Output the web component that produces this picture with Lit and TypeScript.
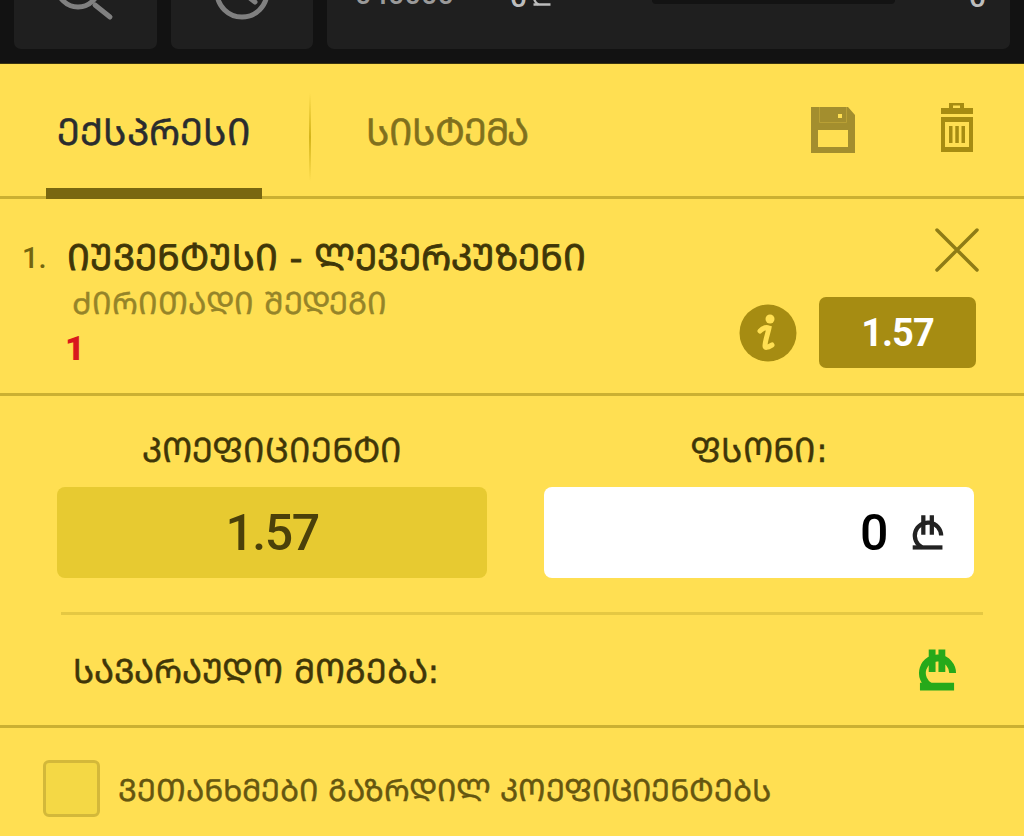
import { css, html, LitElement } from 'lit';
import { customElement } from 'lit/decorators.js';

const gel = html`<svg class="gel" viewBox="0 0 40 42" aria-hidden="true">
  <path d="M35.500 24A15.500 15.500 0 1 0 13 38" />
  <path class="bar" d="M2 38H37" />
  <path d="M14.500 0V23M24.500 0V23" />
</svg>`;

@customElement('app-root')
export class AppRoot extends LitElement {
  static styles = css`
    :host {
      display: block;
      width: 1024px;
      height: 836px;
      overflow: hidden;
      background: #ffdf52;
      font-family: 'DejaVu Sans', 'Noto Sans', sans-serif;
    }

    .topbar {
      height: 64px;
      box-sizing: border-box;
      background: #121212;
      border-bottom: 1px solid #3a3410;
      padding: 0 14px 14px;
      display: flex;
      gap: 14px;
    }

    .tile {
      background: #1f1f1f;
      border-radius: 0 0 7px 7px;
      overflow: hidden;
      position: relative;
    }

    .tile.square {
      width: 142.5px;
    }

    .tile.wide {
      flex: 1;
    }

    .tile .glyph {
      position: absolute;
      top: 0;
      left: 0;
      overflow: visible;
      fill: none;
      stroke: #808080;
      stroke-width: 5;
      stroke-linecap: round;
    }

    .peek {
      position: absolute;
      font-family: Roboto, sans-serif;
      font-weight: 500;
      color: #bdbdbd;
    }

    .peek.code {
      left: 28px;
      top: -20px;
      font-size: 29px;
      line-height: 29px;
      color: #9a9a9a;
    }

    .peek.zero {
      top: -18px;
      font-size: 30px;
      line-height: 30px;
    }

    .peek.left {
      left: 183px;
    }

    .peek.right {
      left: 642px;
    }

    .tile .gel.peek-gel {
      position: absolute;
      left: 205px;
      top: -15px;
      width: 20px;
      height: 22px;
      color: #bdbdbd;
      stroke-width: 5;
    }

    .slot {
      position: absolute;
      top: 0;
      left: 325px;
      width: 243px;
      height: 4px;
      border-radius: 0 0 4px 4px;
      background: #131313;
    }

    .tabs {
      height: 135px;
      box-sizing: border-box;
      display: flex;
      align-items: center;
      border-bottom: 3px solid #cbb032;
      padding-left: 46px;
    }

    .tab {
      width: 216px;
      height: 100%;
      display: flex;
      align-items: center;
      justify-content: center;
      font-size: 37px;
      -webkit-text-stroke: 0.5px currentColor;
      color: #2a2c2e;
      position: relative;
      box-sizing: border-box;
    }

    .tab.active::after {
      content: '';
      position: absolute;
      left: 0;
      right: 0;
      bottom: -3px;
      height: 11px;
      background: #796710;
    }

    .tab.other {
      color: #80701d;
      width: auto;
      margin-left: 55px;
      letter-spacing: -1px;
    }

    .sep {
      width: 2px;
      height: 88px;
      margin: 14px 0 0 47px;
      background: linear-gradient(transparent, #d4b41a, transparent);
    }

    .tools {
      margin-left: auto;
      padding-right: 51px;
      display: flex;
      align-items: center;
      gap: 86px;
    }

    .tools svg {
      display: block;
    }

    .tools .trash {
      margin-bottom: 6px;
    }

    .selection {
      height: 197px;
      box-sizing: border-box;
      border-bottom: 3px solid #cbb032;
      padding: 38px 48px 0 22px;
      display: flex;
      justify-content: space-between;
    }

    .pick {
      display: grid;
      grid-template-columns: 45px auto;
      align-content: start;
    }

    .index {
      font-family: Roboto, sans-serif;
      font-weight: 500;
      font-size: 29px;
      line-height: 42px;
      color: #74650f;
    }

    .match {
      font-size: 36px;
      line-height: 42px;
      -webkit-text-stroke: 0.8px currentColor;
      color: #3f3608;
    }

    .market {
      grid-column: 2;
      margin: 4px 0 0 5px;
      font-size: 30.800px;
      line-height: 40px;
      -webkit-text-stroke: 0.4px currentColor;
      color: #958429;
    }

    .line {
      grid-column: 2;
      margin: 1px 0 0 -2px;
      font-family: Roboto, sans-serif;
      font-weight: 900;
      font-size: 34px;
      line-height: 48px;
      color: #d8191d;
    }

    .actions {
      display: flex;
      flex-direction: column;
      align-items: flex-end;
      gap: 24px;
      margin-top: -10px;
    }

    .close {
      display: block;
      width: 46px;
      height: 46px;
      margin-right: -4px;
    }

    .odds-row {
      display: flex;
      align-items: center;
      gap: 22px;
    }

    .info {
      display: block;
      width: 58px;
      height: 58px;
    }

    .odds {
      width: 157px;
      height: 71px;
      border-radius: 7px;
      background: #a68c12;
      color: #fff;
      font-family: Roboto, sans-serif;
      font-weight: 700;
      font-size: 38px;
      letter-spacing: -1px;
      display: flex;
      align-items: center;
      justify-content: center;
    }

    .stake {
      padding: 34px 50px 0 57px;
      display: grid;
      grid-template-columns: 430px 430px;
      column-gap: 57px;
    }

    .label {
      font-size: 33.800px;
      line-height: 42px;
      -webkit-text-stroke: 0.4px currentColor;
      text-align: center;
      color: #3f3608;
      margin-bottom: 15px;
    }

    .box {
      height: 91px;
      border-radius: 8px;
      display: flex;
      align-items: center;
      font-family: Roboto, sans-serif;
      font-size: 50px;
      letter-spacing: -1.500px;
    }

    .box.total {
      background: #e7ca31;
      color: #4b400a;
      justify-content: center;
      font-weight: 500;
    }

    .box.amount {
      background: #fff;
      color: #000;
      justify-content: flex-end;
      padding-right: 29px;
      gap: 24px;
      font-weight: 500;
    }

    .gel {
      display: block;
      width: 34px;
      height: 38px;
      fill: none;
      stroke: currentColor;
      stroke-width: 5;
    }

    .amount .gel {
      color: #222;
    }

    .divider {
      height: 3px;
      margin: 34px 41px 0 61px;
      background: #e5c843;
    }

    .win {
      height: 113px;
      box-sizing: border-box;
      border-bottom: 3px solid #cbb032;
      padding: 0 67px 0 73px;
      display: flex;
      align-items: center;
      justify-content: space-between;
      font-size: 33.500px;
      -webkit-text-stroke: 0.5px currentColor;
      color: #3f3608;
    }

    .win .gel {
      width: 39px;
      height: 42px;
      color: #26a91a;
      stroke-width: 7;
    }

    .win .gel .bar {
      stroke-width: 8;
    }

    .agree {
      padding: 32px 0 0 43px;
      display: flex;
      align-items: center;
      gap: 18px;
      font-size: 30.600px;
      -webkit-text-stroke: 0.4px currentColor;
      color: #655610;
    }

    .check {
      width: 57px;
      height: 57px;
      box-sizing: border-box;
      border: 3px solid #d3b83a;
      border-radius: 6px;
      background: #f4d845;
    }
  `;

  render() {
    return html`
      <div class="topbar">
        <div class="tile square">
          <svg class="glyph" width="143" height="50">
            <circle cx="64" cy="-14" r="21" /><path d="M81 5L96 17" />
          </svg>
        </div>
        <div class="tile square">
          <svg class="glyph" width="143" height="50">
            <circle cx="71" cy="-8" r="25" /><path d="M71 -8L84 2" />
          </svg>
        </div>
        <div class="tile wide">
          <span class="peek code">040000</span>
          <span class="peek zero left">0</span>
          <svg class="gel peek-gel" viewBox="0 0 40 42">
            <path d="M35.500 24A15.500 15.500 0 1 0 13 38" />
            <path d="M3 38H37" />
            <path d="M15 0V23M24.500 0V23" />
          </svg>
          <div class="slot"></div>
          <span class="peek zero right">0</span>
        </div>
      </div>

      <div class="tabs">
        <div class="tab active">ᲔᲥᲡᲞᲠᲔᲡᲘ</div>
        <div class="sep"></div>
        <div class="tab other">ᲡᲘᲡᲢᲔᲛᲐ</div>
        <div class="tools">
          <svg viewBox="0 0 44 46" width="44" height="46">
            <path fill="#a38e2e" fill-rule="evenodd" d="M0 0h37l7 8v38H0zM7 23v17h30V23zM27 7v4h4V7z" />
            <path fill="none" stroke="#b9a035" stroke-width="1" d="M8.500 0v15.500h27V0" />
          </svg>
          <svg class="trash" viewBox="0 0 32 49" width="32" height="49" fill="#a68c12">
            <path fill-rule="evenodd" d="M8 0h15v5h9v6H0V5h8zM12 2.500V5h7V2.500zM0 14h32v35H0zM4 19v25h24V19zM8 23h3.500v17H8zM14.300 23h3.500v17h-3.500zM20.500 23H24v17h-3.500z" />
          </svg>
        </div>
      </div>

      <div class="selection">
        <div class="pick">
          <div class="index">1.</div>
          <div class="match">ᲘᲣᲕᲔᲜᲢᲣᲡᲘ - ᲚᲔᲕᲔᲠᲙᲣᲖᲔᲜᲘ</div>
          <div class="market">ᲫᲘᲠᲘᲗᲐᲓᲘ ᲨᲔᲓᲔᲒᲘ</div>
          <div class="line">1</div>
        </div>
        <div class="actions">
          <svg class="close" viewBox="0 0 46 46" fill="none" stroke="#8f7c16" stroke-width="3.500" stroke-linecap="round">
            <path d="M3 3l40 40M43 3L3 43" />
          </svg>
          <div class="odds-row">
            <svg class="info" viewBox="0 0 58 58">
              <circle cx="29" cy="29" r="28.500" fill="#a68c12" />
              <circle cx="31" cy="15" r="4.500" fill="#ffdf52" />
              <path d="M21 27c3-3 6-4 9-3-1 5-4 13-4 18 0 2 2 2 7-1" fill="none" stroke="#ffdf52" stroke-width="5" stroke-linecap="round" />
            </svg>
            <div class="odds">1.57</div>
          </div>
        </div>
      </div>

      <div class="stake">
        <div>
          <div class="label">ᲙᲝᲔᲤᲘᲪᲘᲔᲜᲢᲘ</div>
          <div class="box total">1.57</div>
        </div>
        <div>
          <div class="label">ᲤᲡᲝᲜᲘ:</div>
          <div class="box amount"><span>0</span>${gel}</div>
        </div>
      </div>
      <div class="divider"></div>
      <div class="win">
        <span>ᲡᲐᲕᲐᲠᲐᲣᲓᲝ ᲛᲝᲒᲔᲑᲐ:</span>
        ${gel}
      </div>
      <div class="agree">
        <div class="check"></div>
        <span>ᲕᲔᲗᲐᲜᲮᲛᲔᲑᲘ ᲒᲐᲖᲠᲓᲘᲚ ᲙᲝᲔᲤᲘᲪᲘᲔᲜᲢᲔᲑᲡ</span>
      </div>
    `;
  }
}
